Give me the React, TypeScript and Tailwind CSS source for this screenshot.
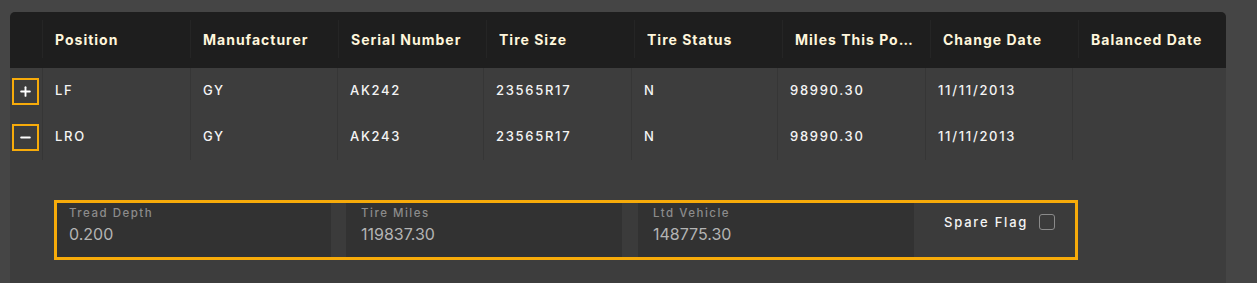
import { Plus, Minus } from "lucide-react";

type Tire = {
  position: string;
  manufacturer: string;
  serial: string;
  size: string;
  status: string;
  miles: string;
  changeDate: string;
  balancedDate: string;
  expanded: boolean;
};

const headers = [
  "Position",
  "Manufacturer",
  "Serial Number",
  "Tire Size",
  "Tire Status",
  "Miles This Position",
  "Change Date",
  "Balanced Date",
];

const tires: Tire[] = [
  {
    position: "LF",
    manufacturer: "GY",
    serial: "AK242",
    size: "23565R17",
    status: "N",
    miles: "98990.30",
    changeDate: "11/11/2013",
    balancedDate: "",
    expanded: false,
  },
  {
    position: "LRO",
    manufacturer: "GY",
    serial: "AK243",
    size: "23565R17",
    status: "N",
    miles: "98990.30",
    changeDate: "11/11/2013",
    balancedDate: "",
    expanded: true,
  },
];

const fields = [
  { label: "Tread Depth", value: "0.200", cls: "w-[274px] pl-[12px]" },
  { label: "Tire Miles", value: "119837.30", cls: "w-[276px] ml-[15px] pl-[15px]" },
  { label: "Ltd Vehicle", value: "148775.30", cls: "w-[276px] ml-[16px] pl-[15px]" },
];

export default function App() {
  return (
    <div
      className="h-[283px] overflow-hidden bg-[#454545] pt-3 pl-[10px]"
      style={{ fontFamily: "Inter, 'Noto Sans', sans-serif" }}
    >
      <div className="w-[1216px] h-[271px] rounded-t-[5px] overflow-hidden bg-[#3d3d3d]">
        {/* header */}
        <div className="grid grid-cols-[32px_repeat(8,148px)] h-[56px] bg-[#1e1e1e]">
          <div />
          {headers.map((h) => (
            <div
              key={h}
              className="flex items-center border-l border-[#252525] mt-[8px] mb-[10px] px-[12px] text-[14px] font-bold tracking-[1px] text-[#fff6dc]"
            >
              <span className="truncate">{h}</span>
            </div>
          ))}
        </div>

        {/* rows */}
        <div className="grid grid-cols-[32px_148px_147px_146px_148px_146px_148px_147px_154px]">
          {tires.map((t) => {
            const cells = [
              t.position,
              t.manufacturer,
              t.serial,
              t.size,
              t.status,
              t.miles,
              t.changeDate,
              t.balancedDate,
            ];
            return [
              <div key={t.serial + "btn"} className="h-[46px] flex items-center pl-[2px]">
                <button className="w-[27px] h-[27px] border-2 border-[#f7ab0a] flex items-center justify-center text-white">
                  {t.expanded ? (
                    <Minus size={15} strokeWidth={3} />
                  ) : (
                    <Plus size={15} strokeWidth={3} />
                  )}
                </button>
              </div>,
              ...cells.map((c, i) => (
                <div
                  key={t.serial + i}
                  className="h-[46px] flex items-center border-l border-[#363636] px-[12px] text-[13px] font-medium tracking-[1.7px] text-[#f4f4f4]"
                >
                  {c}
                </div>
              )),
            ];
          })}
        </div>

        {/* expanded detail */}
        <div className="pt-[40px] pl-[44px]">
          <div className="w-[1024px] h-[60px] border-[3px] border-[#f7ab0a] flex bg-[#3b3b3b]">
            {fields.map((f) => (
              <div key={f.label} className={`${f.cls} bg-[#323232] pt-[3px]`}>
                <div className="text-[11.5px] font-medium tracking-[1.5px] text-[#8c8c8c] leading-[14px]">
                  {f.label}
                </div>
                <div className="text-[16px] text-[#b4b4b4] leading-[20px] mt-[4px]">
                  {f.value}
                </div>
              </div>
            ))}
            <div className="flex-1 flex items-start pt-[10px] pl-[30px] gap-[11px]">
              <span className="text-[13px] font-medium tracking-[1.8px] text-[#f4f4f4] leading-[18px]">
                Spare Flag
              </span>
              <span className="mt-[1px] w-[16px] h-[16px] rounded-[3px] border border-[#8a8a8a]" />
            </div>
          </div>
        </div>
      </div>
    </div>
  );
}
